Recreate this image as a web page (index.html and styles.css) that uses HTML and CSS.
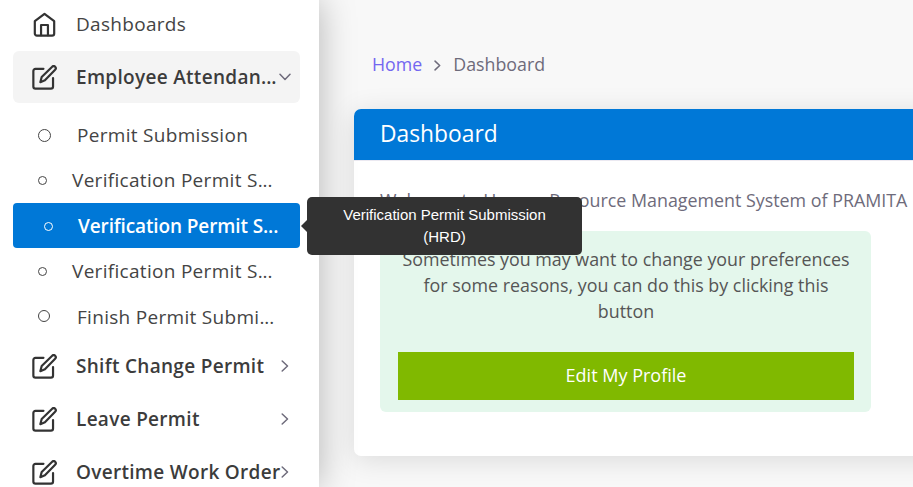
FILE: index.html
```html
<!DOCTYPE html>
<html lang="en">
<head>
<meta charset="utf-8">
<title>Dashboard</title>
<link rel="stylesheet" href="styles.css">
</head>
<body>
<svg width="0" height="0" class="defs">
  <symbol id="edit" viewBox="0 0 24 24"><path d="M11 3.700H3.300a2 2 0 0 0-2 2V20.700a2 2 0 0 0 2 2H18.200a2 2 0 0 0 2-2V12.500"/><path d="M19.400 1.700a1.900 1.900 0 0 1 2.800 2.800L12.400 14.700l-4.400 1.800 1.300-5z"/></symbol>
  <symbol id="right" viewBox="0 0 8 12"><path d="M1.200 1 6.500 6 1.200 11"/></symbol>
</svg>
<div class="app">
  <aside class="sidebar">
    <nav class="nav">
      <a class="item top"><svg class="icon" viewBox="0 0 24 24"><path d="M2.700 8.800 12 1.700l9.300 7.100V20.700a2 2 0 0 1-2 2H4.700a2 2 0 0 1-2-2z"/><path d="M8.700 22.300V12.500h6.600v9.800"/></svg><span class="label light">Dashboards</span></a>
      <a class="item open"><svg class="icon"><use href="#edit"/></svg><span class="label">Employee Attendan<span class="dots">...</span></span><svg class="down" viewBox="0 0 12 8"><path d="M1 1.200 6 6.500 11 1.200"/></svg></a>
      <div class="sub">
        <a class="child first"><i class="dot"></i><span class="sublabel">Permit Submission</span></a>
        <a class="child deep"><i class="dot"></i><span class="sublabel">Verification Permit S<span class="dots">...</span></span></a>
        <a class="child deep active"><i class="dot"></i><span class="sublabel">Verification Permit S<span class="dots">...</span></span></a>
        <a class="child deep after"><i class="dot"></i><span class="sublabel">Verification Permit S<span class="dots">...</span></span></a>
        <a class="child last"><i class="dot"></i><span class="sublabel">Finish Permit Submi<span class="dots">...</span></span></a>
      </div>
      <a class="item"><svg class="icon"><use href="#edit"/></svg><span class="label">Shift Change Permit</span><svg class="right"><use href="#right"/></svg></a>
      <a class="item"><svg class="icon"><use href="#edit"/></svg><span class="label">Leave Permit</span><svg class="right"><use href="#right"/></svg></a>
      <a class="item"><svg class="icon"><use href="#edit"/></svg><span class="label">Overtime Work Order</span><svg class="right"><use href="#right"/></svg></a>
    </nav>
  </aside>
  <main class="main">
    <div class="crumbs"><a class="home">Home</a><svg class="sep"><use href="#right"/></svg><span>Dashboard</span></div>
    <section class="card">
      <h1 class="title">Dashboard</h1>
      <div class="body">
        <p class="welcome">Welcome to Human Resource Management System of PRAMITA</p>
        <div class="notice">
          <p class="text">Sometimes you may want to change your preferences<br>for some reasons, you can do this by clicking this<br>button</p>
          <a class="button">Edit My Profile</a>
        </div>
      </div>
    </section>
  </main>
  <div class="tooltip">Verification Permit Submission<br>(HRD)</div>
</div>
</body>
</html>
```
FILE: styles.css
```css
* { box-sizing: border-box; }
body { margin: 0; overflow: hidden; font-family: "Open Sans", "Noto Sans", sans-serif; }
svg { fill: none; stroke: #333; stroke-linecap: round; stroke-linejoin: round; flex: none; }
.defs { position: absolute; }
.app { position: relative; display: flex; width: 913px; height: 487px; overflow: hidden; background: #f8f8f8; }
.sidebar { position: relative; z-index: 1; flex: none; width: 319px; height: 487px; background: #fff; box-shadow: 0 0 34px rgba(0,0,0,.28); clip-path: inset(0 -50px 0 0); }
.nav { width: 300px; padding-left: 13px; }
.item { display: flex; align-items: center; height: 52px; margin-bottom: 1px; padding: 0 8px 0 19px; border-radius: 6px; }
.item.top { height: 50px; padding-bottom: 2px; }
.item.open { background: #f4f4f4; margin-bottom: 10px; padding-right: 9px; }
.icon { width: 25px; height: 25px; stroke-width: 2.100; margin-top: 1px; }
.label { margin-left: 19px; font-size: 19px; line-height: 26px; font-weight: 600; color: #3c3c3c; white-space: nowrap; letter-spacing: .3px; }
.light { font-weight: 400; color: #444; }
.dots { letter-spacing: -.1px; }
.down { width: 12px; height: 8px; margin-left: auto; stroke: #6e6b7b; stroke-width: 1.500; }
.right { width: 8px; height: 12px; margin-left: auto; margin-right: 3px; stroke: #6e6b7b; stroke-width: 1.500; }
.sub { margin-bottom: 1px; }
.child { display: flex; align-items: center; height: 45px; padding-left: 25px; border-radius: 4px; color: #444; font-size: 19px; }
.dot { flex: none; width: 13px; height: 13px; margin-top: -1px; border: 1.500px solid #444; border-radius: 50%; }
.sublabel { margin: -2px 0 0 26px; line-height: 26px; white-space: nowrap; letter-spacing: .3px; }
.deep .dot { width: 9px; height: 9px; border-width: 1px; }
.deep .sublabel { margin-left: 25px; letter-spacing: .3px; }
.active { background: #0078d7; color: #fff; font-weight: 600; padding-left: 31px; }
.active .sublabel { margin-top: 0; letter-spacing: -.12px; }
.active .dot { border-color: #fff; margin-top: 1px; }
.after { margin-top: 1px; }
.last .dot { width: 12px; height: 12px; margin-right: 1px; }
.last .sublabel { margin-top: 0; }
.main { flex: 1; min-width: 0; padding: 51px 0 0 35px; }
.crumbs { display: flex; align-items: center; height: 26px; padding-left: 18px; font-size: 17.800px; color: #6e6b7b; }
.home { color: #7367f0; }
.sep { width: 7px; height: 11px; margin: 2px 12px 0 12px; stroke: #6e6b7b; stroke-width: 1.700; }
.card { width: 620px; height: 347px; margin-top: 32px; background: #fff; border-radius: 7px; overflow: hidden; box-shadow: 0 4px 28px rgba(0,0,0,.12); }
.title { height: 51px; margin: 0; padding-left: 26px; background: #0078d7; color: #fff; font-size: 22.800px; line-height: 50px; font-weight: 400; }
.body { border-top: 1px solid #ebe9f1; padding: 26px 26px; }
.welcome { margin: 0; height: 44px; line-height: 26px; font-size: 17.850px; color: #6e6b7b; white-space: nowrap; }
.notice { width: 491px; height: 181px; padding: 15px 17px 0 18px; background: #e4f7ec; border-radius: 6px; text-align: center; }
.text { margin: 0; height: 106px; font-size: 17.850px; line-height: 26px; color: #555; white-space: nowrap; }
.button { display: block; height: 48px; background: #80b900; color: #fff; font-size: 18px; line-height: 47px; font-weight: 500; }
.tooltip { position: absolute; z-index: 2; left: 307px; top: 197px; width: 275px; height: 58px; padding-top: 7px; background: #323232; border-radius: 5px; color: #fff; text-align: center; font: 15px/22px "Liberation Sans", sans-serif; }
.tooltip::before { content: ""; position: absolute; left: -6px; top: 23px; border: 6px solid transparent; border-left: 0; border-right-color: #323232; }
```
